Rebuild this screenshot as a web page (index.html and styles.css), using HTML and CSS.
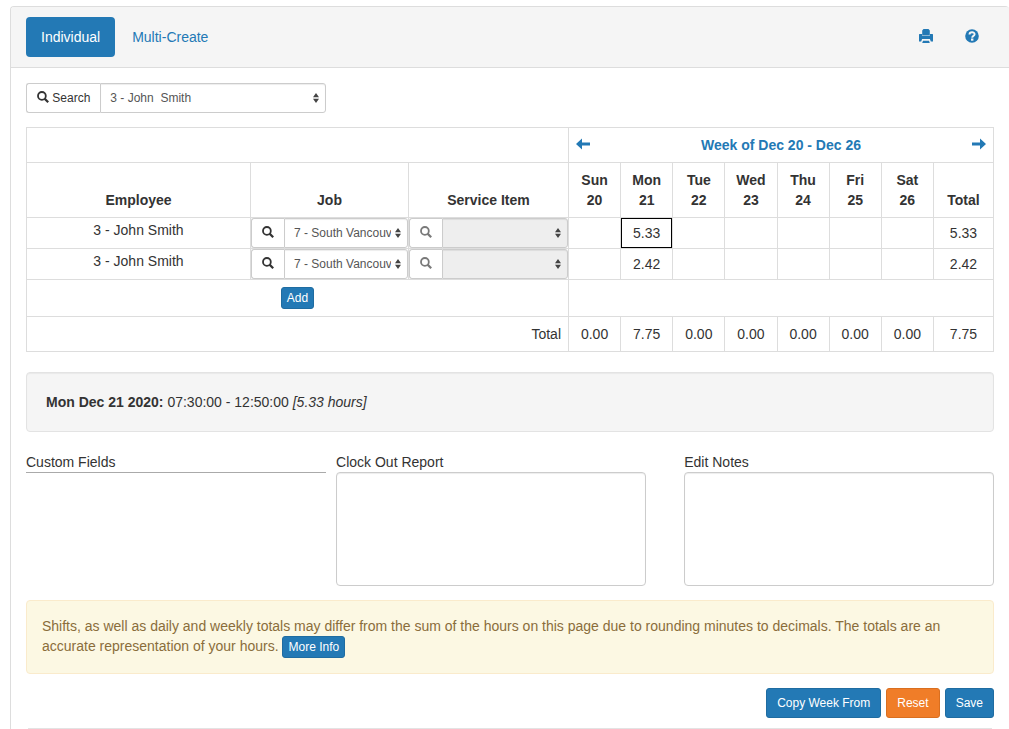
FILE: index.html
```html
<!DOCTYPE html>
<html lang="en">
<head>
    <meta charset="UTF-8">
    <meta name="viewport" content="width=device-width, initial-scale=1.0">
    <title>Time Entry</title>
    <link rel="stylesheet" href="styles.css">
</head>
<body>
    <svg class="sprite" aria-hidden="true">
        <symbol id="icon-search" viewBox="0 0 12 12">
            <circle cx="4.900" cy="4.900" r="3.900" fill="none" stroke="currentColor" stroke-width="1.800"/>
            <path d="M7.600 7.600L11.200 11.200" fill="none" stroke="currentColor" stroke-width="2.200"/>
        </symbol>
        <symbol id="icon-print" viewBox="0 0 14 14">
            <path d="M4.500 0h5l1.300 1.500V6H3.200V1.500z" fill="currentColor"/>
            <path d="M0 5.500Q0 5 .6 5H3v1.400h8V5h2.400q.6 0 .6.500V12.500h-2.200l-.9-2.500H3.100l-.9 2.500H0z" fill="currentColor"/>
            <path d="M4 11.800h6l.8 2.200H3.200z" fill="currentColor"/>
        </symbol>
        <symbol id="icon-help" viewBox="0 0 14 14">
            <circle cx="7" cy="7" r="6.800" fill="currentColor"/>
            <path d="M4.500 5.500C4.500 2.500 9.600 2.500 9.600 5.200C9.600 7 7.200 6.700 7.200 8.700" fill="none" stroke="#f5f5f5" stroke-width="1.900"/>
            <path d="M6 9.500h2.400v2.200H6z" fill="#f5f5f5"/>
        </symbol>
        <symbol id="icon-left" viewBox="0 0 14 14">
            <path d="M0 7L6 1.500V5.600h8v2.800H6v4.100z" fill="currentColor"/>
        </symbol>
        <symbol id="icon-right" viewBox="0 0 14 14">
            <path d="M14 7L8 1.500V5.600H0v2.800h8v4.100z" fill="currentColor"/>
        </symbol>
        <symbol id="icon-sort" viewBox="0 0 6 10">
            <path d="M3 0l3 4.300H0zM3 10l3-4.300H0z" fill="currentColor"/>
        </symbol>
    </svg>

    <main class="panel">
        <header class="panel-heading">
            <nav class="pills">
                <a class="pill active" href="#individual">Individual</a>
                <a class="pill" href="#multi">Multi-Create</a>
            </nav>
            <nav class="pills">
                <a class="pill" href="#print" aria-label="Print"><svg class="icon"><use href="#icon-print"/></svg></a>
                <a class="pill" href="#help" aria-label="Help"><svg class="icon"><use href="#icon-help"/></svg></a>
            </nav>
        </header>

        <div class="panel-body">
            <div class="input-group employee-picker">
                <button class="group-btn" type="button"><svg class="icon"><use href="#icon-search"/></svg> Search</button>
                <span class="select-wrap">
                    <select class="select" aria-label="Employee">
                        <option>3 - John&nbsp; Smith</option>
                    </select>
                    <svg class="sort"><use href="#icon-sort"/></svg>
                </span>
            </div>

            <table class="timesheet">
                <colgroup>
                    <col class="col-employee">
                    <col class="col-job">
                    <col class="col-item">
                    <col span="7">
                    <col class="col-total">
                </colgroup>
                <thead>
                    <tr>
                        <td colspan="3"></td>
                        <th colspan="8">
                            <div class="week">
                                <a href="#prev" aria-label="Previous week"><svg class="icon"><use href="#icon-left"/></svg></a>
                                <a href="#week">Week of Dec 20 - Dec 26</a>
                                <a href="#next" aria-label="Next week"><svg class="icon"><use href="#icon-right"/></svg></a>
                            </div>
                        </th>
                    </tr>
                    <tr>
                        <th>Employee</th>
                        <th>Job</th>
                        <th>Service Item</th>
                        <th>Sun<br>20</th>
                        <th>Mon<br>21</th>
                        <th>Tue<br>22</th>
                        <th>Wed<br>23</th>
                        <th>Thu<br>24</th>
                        <th>Fri<br>25</th>
                        <th>Sat<br>26</th>
                        <th>Total</th>
                    </tr>
                </thead>
                <tbody>
                    <tr class="entry">
                        <td class="name">3 - John Smith</td>
                        <td>
                            <div class="input-group">
                                <button class="group-btn" type="button" aria-label="Search jobs"><svg class="icon"><use href="#icon-search"/></svg></button>
                                <span class="select-wrap">
                                    <select class="select" aria-label="Job">
                                        <option>7 - South Vancouver</option>
                                    </select>
                                    <svg class="sort"><use href="#icon-sort"/></svg>
                                </span>
                            </div>
                        </td>
                        <td>
                            <div class="input-group">
                                <button class="group-btn" type="button" aria-label="Search service items" disabled><svg class="icon"><use href="#icon-search"/></svg></button>
                                <span class="select-wrap">
                                    <select class="select" aria-label="Service item" disabled></select>
                                    <svg class="sort"><use href="#icon-sort"/></svg>
                                </span>
                            </div>
                        </td>
                        <td></td>
                        <td class="selected">5.33</td>
                        <td></td>
                        <td></td>
                        <td></td>
                        <td></td>
                        <td></td>
                        <td>5.33</td>
                    </tr>
                    <tr class="entry">
                        <td class="name">3 - John Smith</td>
                        <td>
                            <div class="input-group">
                                <button class="group-btn" type="button" aria-label="Search jobs"><svg class="icon"><use href="#icon-search"/></svg></button>
                                <span class="select-wrap">
                                    <select class="select" aria-label="Job">
                                        <option>7 - South Vancouver</option>
                                    </select>
                                    <svg class="sort"><use href="#icon-sort"/></svg>
                                </span>
                            </div>
                        </td>
                        <td>
                            <div class="input-group">
                                <button class="group-btn" type="button" aria-label="Search service items" disabled><svg class="icon"><use href="#icon-search"/></svg></button>
                                <span class="select-wrap">
                                    <select class="select" aria-label="Service item" disabled></select>
                                    <svg class="sort"><use href="#icon-sort"/></svg>
                                </span>
                            </div>
                        </td>
                        <td></td>
                        <td>2.42</td>
                        <td></td>
                        <td></td>
                        <td></td>
                        <td></td>
                        <td></td>
                        <td>2.42</td>
                    </tr>
                    <tr>
                        <td colspan="3"><button class="btn btn-xs" type="button">Add</button></td>
                        <td colspan="8"></td>
                    </tr>
                </tbody>
                <tfoot>
                    <tr>
                        <td class="sum-label" colspan="3">Total</td>
                        <td>0.00</td>
                        <td>7.75</td>
                        <td>0.00</td>
                        <td>0.00</td>
                        <td>0.00</td>
                        <td>0.00</td>
                        <td>0.00</td>
                        <td>7.75</td>
                    </tr>
                </tfoot>
            </table>

            <div class="well"><strong>Mon Dec 21 2020:</strong> 07:30:00 - 12:50:00 <em>[5.33 hours]</em></div>

            <div class="details">
                <div class="custom-fields">Custom Fields</div>
                <div class="field">
                    <label for="report">Clock Out Report</label>
                    <textarea id="report" rows="5"></textarea>
                </div>
                <div class="field field-notes">
                    <label for="notes">Edit Notes</label>
                    <textarea id="notes" rows="5"></textarea>
                </div>
            </div>

            <div class="alert">
                Shifts, as well as daily and weekly totals may differ from the sum of the hours on this page due to rounding minutes to decimals. The totals are an accurate representation of your hours.
                <button class="btn btn-xs" type="button">More Info</button>
            </div>

            <div class="actions">
                <button class="btn" type="button">Copy Week From</button>
                <button class="btn btn-warning" type="reset">Reset</button>
                <button class="btn" type="submit">Save</button>
            </div>

            <hr class="divider">
        </div>
    </main>
</body>
</html>
```
FILE: styles.css
```css
* {
    box-sizing: border-box;
}

body {
    margin: 0;
    padding: 6px 0 0 10px;
    font-family: "Liberation Sans", Arial, sans-serif;
    font-size: 14px;
    line-height: 20px;
    color: #333;
    background: #fff;
}

a {
    color: #2379b5;
    text-decoration: none;
}

button, select, textarea {
    font-family: inherit;
    margin: 0;
}

.sprite {
    display: none;
}

.icon {
    width: 14px;
    height: 14px;
    vertical-align: -1px;
}

.panel {
    min-height: calc(100vh - 6px);
    border: 1px solid #ddd;
    border-width: 1px 0 0 1px;
    border-radius: 4px 4px 0 0;
}

.panel-heading {
    display: flex;
    justify-content: space-between;
    padding: 10px 0 10px 15px;
    background: #f5f5f5;
    border-bottom: 1px solid #ddd;
    border-radius: 3px 3px 0 0;
}

.pills {
    display: flex;
    gap: 2px;
}

.pills:last-child {
    padding-right: 15px;
}

.pill {
    padding: 10px 15px;
    border-radius: 4px;
}

.pill.active {
    color: #fff;
    background: #2379b5;
}

.panel-body {
    padding: 15px 15px 0;
}

/* search button joined to a drop-down */
.input-group {
    display: flex;
    height: 30px;
}

.employee-picker {
    width: 31%;
    margin-bottom: 14px;
}

.group-btn {
    flex: none;
    padding: 5px 10px;
    font-size: 12px;
    line-height: 18px;
    color: #333;
    background: #fff;
    border: 1px solid #ccc;
    border-right: 0;
    border-radius: 3px 0 0 3px;
}

.group-btn .icon {
    width: 12px;
    height: 12px;
}

.group-btn:disabled .icon {
    opacity: 0.65;
}

.select-wrap {
    position: relative;
    flex: 1;
    min-width: 0;
}

.select {
    display: block;
    width: 100%;
    height: 30px;
    padding: 5px 16px 5px 9px;
    font-size: 12px;
    line-height: 18px;
    color: #555;
    background: #fff;
    border: 1px solid #ccc;
    border-radius: 0 3px 3px 0;
    box-shadow: inset 0 1px 1px rgba(0, 0, 0, 0.075);
    appearance: none;
}

.select:disabled {
    background: #eee;
    opacity: 1;
}

.sort {
    position: absolute;
    top: 10px;
    right: 7px;
    width: 6px;
    height: 10px;
    color: #444;
    pointer-events: none;
}

.timesheet {
    width: 100%;
    margin-bottom: 20px;
    table-layout: fixed;
    border-collapse: collapse;
    text-align: center;
}

.timesheet th, .timesheet td {
    padding: 7px;
    border: 1px solid #ddd;
    vertical-align: bottom;
}

.col-employee {
    width: 224px;
}

.col-job {
    width: 158px;
}

.col-item {
    width: 160px;
}

.col-total {
    width: 60px;
}

.week {
    display: flex;
    justify-content: space-between;
}

.timesheet .entry td {
    padding: 0;
    vertical-align: middle;
}

.timesheet .entry .name {
    padding: 2px 0;
    vertical-align: top;
}

.timesheet .entry .selected {
    box-shadow: inset 0 0 0 1px #000;
}

.timesheet .sum-label {
    text-align: right;
}

.well {
    padding: 19px;
    margin-bottom: 20px;
    background: #f5f5f5;
    border: 1px solid #e3e3e3;
    border-radius: 4px;
    box-shadow: inset 0 1px 1px rgba(0, 0, 0, 0.05);
}

.details {
    display: flex;
    align-items: flex-start;
    margin-bottom: 14px;
}

.custom-fields {
    width: 31%;
    margin-right: 10px;
    border-bottom: 1px solid #aaa;
}

.field {
    width: 32%;
}

.field-notes {
    margin-left: auto;
}

.field label {
    display: block;
}

.field textarea {
    display: block;
    width: 100%;
    padding: 6px 12px;
    font-size: 14px;
    line-height: 20px;
    color: #555;
    border: 1px solid #ccc;
    border-radius: 4px;
    box-shadow: inset 0 1px 1px rgba(0, 0, 0, 0.075);
    resize: none;
}

.alert {
    padding: 15px;
    margin-bottom: 14px;
    color: #8a6d3b;
    background: #fcf8e3;
    border: 1px solid #faebcc;
    border-radius: 4px;
}

.btn {
    padding: 5px 10px;
    font-size: 12px;
    line-height: 18px;
    color: #fff;
    background: #2379b5;
    border: 1px solid #1f6ca1;
    border-radius: 3px;
    cursor: pointer;
}

.btn-xs {
    padding: 1px 5px;
    vertical-align: top;
}

.btn-warning {
    background: #f07d28;
    border-color: #d96f20;
}

.actions {
    display: flex;
    justify-content: flex-end;
    gap: 5px;
}

.divider {
    margin: 10px 2px 0;
    border: 0;
    border-top: 1px solid #e3e3e3;
}
```
